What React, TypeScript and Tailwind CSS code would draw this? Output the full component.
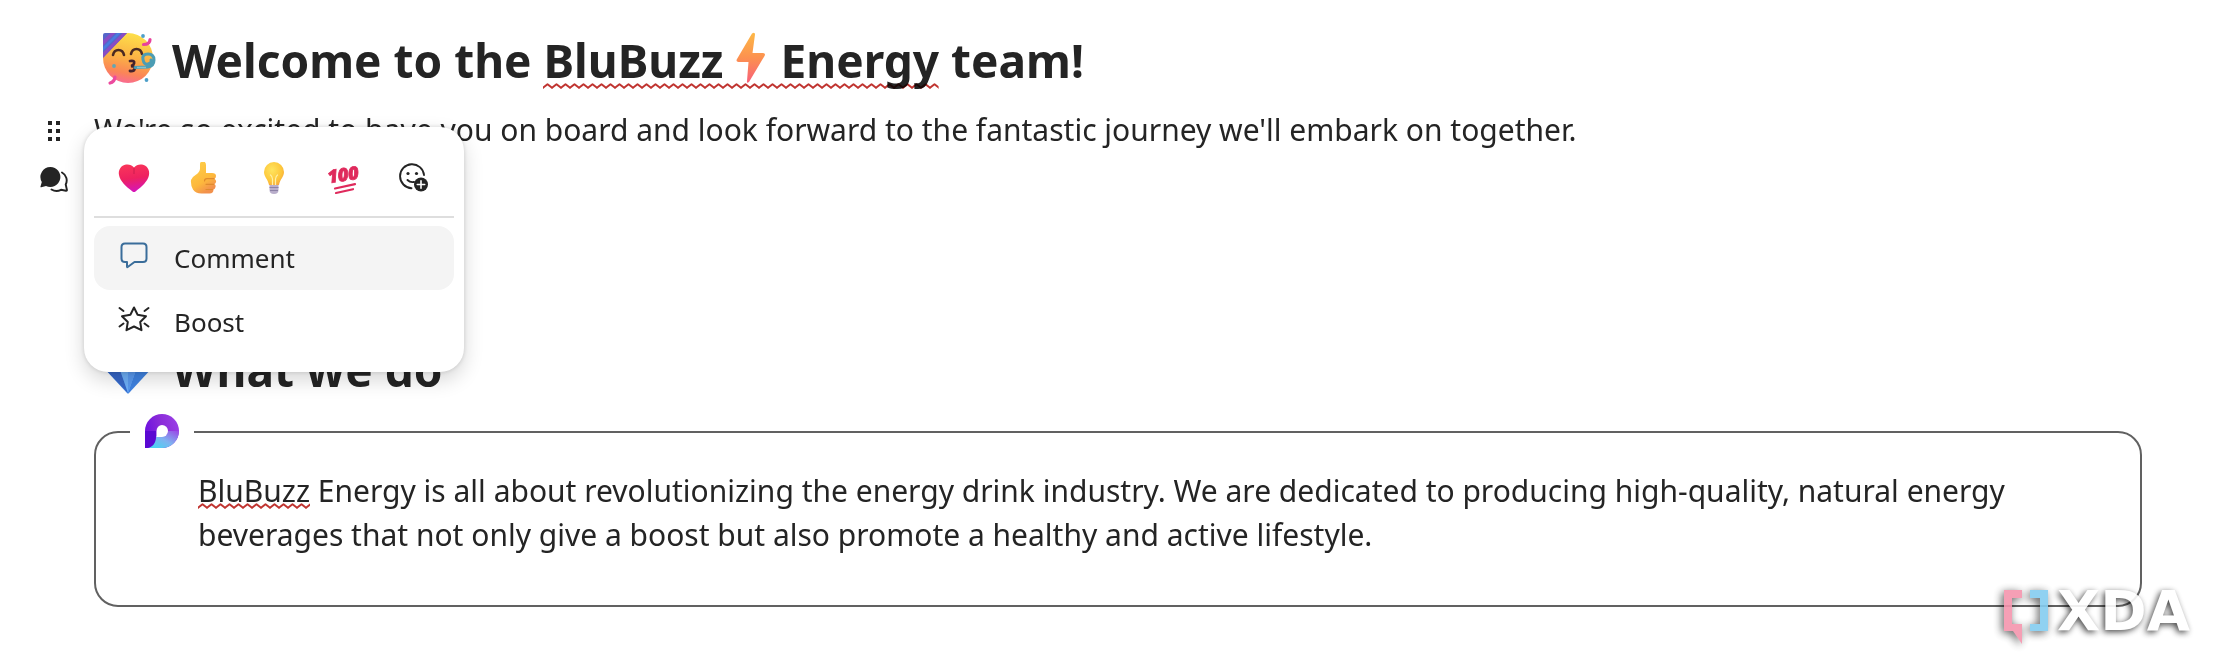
import { useId, type ReactNode } from "react";

/** Red spell-check wave under a word */
function Misspelled({ children }: { children: ReactNode }) {
  const id = useId();
  return (
    <span className="relative">
      {children}
      <svg className="absolute bottom-[2px] left-0 h-[6px] w-full mix-blend-multiply" aria-hidden="true">
        <defs>
          <pattern id={id} width="9" height="6" patternUnits="userSpaceOnUse">
            <path d="M-1 5.4 0 4.8 4.5 1.2 9 4.8 10 5.4" fill="none" stroke="#c03430" strokeWidth="2" strokeLinejoin="round" />
          </pattern>
        </defs>
        <rect width="100%" height="6" fill={`url(#${id})`} />
      </svg>
    </span>
  );
}

function PartyFace() {
  return (
    <svg viewBox="0 0 54 54" className="size-[54px] shrink-0" aria-hidden="true">
      <defs>
        <linearGradient id="party-face" x1="0.6" y1="0" x2="0.4" y2="1">
          <stop offset="0" stopColor="#fde04a" />
          <stop offset="0.5" stopColor="#fbb045" />
          <stop offset="0.8" stopColor="#fb8557" />
          <stop offset="1" stopColor="#f96a94" />
        </linearGradient>
        <clipPath id="party-hat">
          <path d="M3 0h22L1 25V2q0-2 2-2z" />
        </clipPath>
      </defs>
      <circle cx="26" cy="25" r="25" fill="url(#party-face)" />
      <g clipPath="url(#party-hat)">
        <path d="M0 0h26v26H0z" fill="#5566c9" />
        <path d="M-2 13 13-2M-2 25 25-2" stroke="#8a4cc4" strokeWidth="3.5" />
        <path d="M-2 19 19-2" stroke="#4a7be0" strokeWidth="2.5" />
      </g>
      <path d="M11 22q1-5 5.500-5t5.500 5M29 21q1-5 5.500-5t5.500 5" fill="none" stroke="#4a2a22" strokeWidth="2.600" strokeLinecap="round" />
      <path d="M28 28q5-1 4 2.500-.5 2-3 2.500 4 0 3.500 3-.5 2.500-4.500 2" fill="none" stroke="#44232c" strokeWidth="2.800" strokeLinecap="round" />
      <path d="M33 34.500 46 34q6-1 6-7t-6-6-5 5.500 5 4.500 3-4" fill="none" stroke="#4c9db4" strokeWidth="3" strokeLinecap="round" />
      <path d="M35 34.500h9" stroke="#84c4cf" strokeWidth="1.500" />
      <path d="M48 6.500q0 5-6.500 5" fill="none" stroke="#e8419c" strokeWidth="3.200" strokeLinecap="round" />
      <path d="M13 44q-.5 5-5 6" fill="none" stroke="#ec4a9e" strokeWidth="3.200" strokeLinecap="round" />
      <circle cx="41" cy="3" r="1.900" fill="#4d9fc9" />
      <circle cx="12" cy="33" r="1.900" fill="#5fa7b5" />
      <circle cx="44.500" cy="47" r="1.900" fill="#4d9fc9" />
    </svg>
  );
}

function Bolt() {
  return (
    <svg viewBox="0 0 34 52" className="ml-[10px] mr-[13px] inline-block h-[52px] w-[34px] align-[-6px]" aria-hidden="true">
      <defs>
        <linearGradient id="bolt" x1="0" y1="0" x2="0" y2="1">
          <stop offset="0" stopColor="#fdb846" />
          <stop offset="0.5" stopColor="#fc9150" />
          <stop offset="1" stopColor="#f8607a" />
        </linearGradient>
      </defs>
      <path d="M18 1.500q3-2 3 1L18.500 21H29q3 .5 1.500 3L15 50q-2.500 2-2-1l1.500-19H4.500q-3-.5-1.500-3z" fill="url(#bolt)" />
    </svg>
  );
}

function Diamond() {
  return (
    <svg viewBox="0 0 54 54" className="size-[54px] shrink-0" aria-hidden="true">
      <path d="M11 10h30l10 15L27 51q-1 1-2 0L1 25z" fill="#3f83e2" />
      <path d="M1 25h16l9 26z" fill="#3767c8" />
      <path d="M17 25h18l-9 26z" fill="#6fb0f8" />
      <path d="M26 25h9l-9 26z" fill="#5a9af0" />
      <path d="M11 10h30l-6 15H17z" fill="#8cc6fb" />
    </svg>
  );
}

function DragHandleIcon() {
  return (
    <svg viewBox="0 0 12 20" className="h-5 w-3" fill="#242424" aria-hidden="true">
      <path d="M0 0h4v4H0zM8 0h4v4H8zM0 8h4v4H0zM8 8h4v4H8zM0 16h4v4H0zM8 16h4v4H8z" />
    </svg>
  );
}

function ChatIcon() {
  return (
    <svg viewBox="0 0 28 26" className="h-[26px] w-7" aria-hidden="true">
      <path d="M10.500 0A10 10 0 1 1 6 19L1.200 20.300Q.2 20.500.5 19.500L1.800 15A10 10 0 0 1 10.500 0z" fill="#242424" />
      <path d="M22 5.500a9 9 0 0 1 3.700 12l1.200 5.300q.2 1.100-.9.900L21 22.800a9.500 9.500 0 0 1-9.500-.3" fill="none" stroke="#242424" strokeWidth="1.900" strokeLinecap="round" strokeLinejoin="round" />
    </svg>
  );
}

function HeartIcon() {
  return (
    <svg viewBox="0 0 32 32" className="size-8" aria-hidden="true">
      <defs>
        <linearGradient id="heart" x1="0.4" y1="0" x2="0.55" y2="1">
          <stop offset="0" stopColor="#f9355a" />
          <stop offset="0.5" stopColor="#ee2160" />
          <stop offset="1" stopColor="#d415bd" />
        </linearGradient>
      </defs>
      <path d="M16 5.500C18 3 21 2 24 2.500c5 .8 8 5.500 7 10.500-1 6-7 11.500-13.500 16.500q-1.500 1-3 0C8 24.500 2 19 1 13 0 8 3 3.300 8 2.500c3-.5 6 .5 8 3z" fill="url(#heart)" />
      <path d="M16 6v6" stroke="#c11a4c" strokeOpacity="0.5" strokeWidth="1.500" />
    </svg>
  );
}

function ThumbIcon() {
  return (
    <svg viewBox="0 0 32 32" className="size-8" aria-hidden="true">
      <defs>
        <linearGradient id="thumb" x1="0" y1="0" x2="0.500" y2="1">
          <stop offset="0" stopColor="#ffd24a" />
          <stop offset="0.700" stopColor="#fdb83c" />
          <stop offset="1" stopColor="#f2914c" />
        </linearGradient>
      </defs>
      <path d="M12 2q0-2.500 3-2.500T18 3v8h6q4 0 4 3 0 2-1.500 2.700 2 1.300 1.500 3.300-.3 1.500-1.500 2 1.500 1 1 3t-2 2.500q0 4-4 4h-8q-6 0-8.500-4T3 18q1-3 4.500-5 4-2.500 4.500-6z" fill="url(#thumb)" />
      <path d="M26 16.700h-7q-2.500 0-2.500 2.300M25.500 22.300H18M24.500 27.500H18" fill="none" stroke="#e08b2e" strokeWidth="1.200" strokeLinecap="round" />
    </svg>
  );
}

function BulbIcon() {
  return (
    <svg viewBox="0 0 32 32" className="size-8" aria-hidden="true">
      <defs>
        <radialGradient id="bulb" cx="0.4" cy="0.35" r="0.7">
          <stop offset="0" stopColor="#ffe45e" />
          <stop offset="0.700" stopColor="#fdc63a" />
          <stop offset="1" stopColor="#f5a73f" />
        </radialGradient>
      </defs>
      <path d="M16 0a10 10 0 0 1 10 10c0 5-4 7-5 13H11C10 17 6 15 6 10A10 10 0 0 1 16 0z" fill="url(#bulb)" />
      <path d="M12.500 13q1.500 1 2 4v6M19.500 13q-1.500 1-2 4v6" fill="none" stroke="#fff0a8" strokeWidth="1.200" strokeLinecap="round" />
      <path d="M11.500 23h9v5q0 4-4.500 4t-4.500-4z" fill="#b9aecb" />
      <path d="M11.500 25.500h9M12 28.500h8" stroke="#8d82a6" strokeWidth="1" />
    </svg>
  );
}

function HundredIcon() {
  return (
    <svg viewBox="0 0 32 32" className="size-8 overflow-visible" aria-hidden="true">
      <text
        x="15.500"
        y="19"
        transform="rotate(-8 16 16)"
        className="font-['Open_Sans',sans-serif] text-[18px] font-extrabold italic"
        fill="#df2a5c"
        stroke="#df2a5c"
        strokeWidth="0.8"
        textAnchor="middle"
      >
        100
      </text>
      <path d="M7 26.500 27 22.200M8 31l17-3.800" stroke="#df2a5c" strokeWidth="2.200" strokeLinecap="round" />
    </svg>
  );
}

function AddReactionIcon() {
  return (
    <svg viewBox="0 0 32 32" className="size-8" fill="none" aria-hidden="true">
      <path d="M13.500 26.200A12 12 0 1 1 26 13" stroke="#242424" strokeWidth="1.900" strokeLinecap="round" />
      <circle cx="10" cy="11.500" r="1.600" fill="#242424" />
      <circle cx="18.500" cy="11.500" r="1.600" fill="#242424" />
      <path d="M9.500 18q2.500 2.700 6.500 2" stroke="#242424" strokeWidth="1.900" strokeLinecap="round" />
      <circle cx="23" cy="22.500" r="7" fill="#242424" />
      <path d="M23 18.800v7.400M19.300 22.500h7.400" stroke="#fff" strokeWidth="1.600" strokeLinecap="round" />
    </svg>
  );
}

function CommentIcon() {
  return (
    <svg viewBox="0 0 32 32" className="size-8" fill="none" aria-hidden="true">
      <path
        d="M7 1.500h18q3.500 0 3.500 3.500v11.500q0 3.500-3.500 3.500h-8.500l-6.800 5q-.7.400-.7-.5V20H7q-3.500 0-3.500-3.500V5Q3.500 1.500 7 1.500z"
        stroke="#3a6d9a"
        strokeWidth="2"
        strokeLinejoin="round"
      />
    </svg>
  );
}

function BoostIcon() {
  return (
    <svg viewBox="0 0 32 32" className="size-8" fill="none" stroke="#242424" strokeWidth="2" strokeLinecap="round" strokeLinejoin="round" aria-hidden="true">
      <path d="M16 1.500 19.600 8.800 28 10.200 22.200 16 23.500 24.200 16 20.500 8.500 24.200 9.800 16 4 10.200 12.400 8.800z" />
      <path d="M1.500 2l4 3M30.500 2l-4 3M1.500 20.500l4-3M30.500 20.500l-4-3" />
    </svg>
  );
}

function LoopLogo() {
  return (
    <svg viewBox="0 0 34 34" className="size-[34px]" aria-hidden="true">
      <defs>
        <linearGradient id="loop-ring" x1="0" y1="0.600" x2="1" y2="0.300">
          <stop offset="0" stopColor="#6a0fe0" />
          <stop offset="0.500" stopColor="#8a2bd8" />
          <stop offset="1" stopColor="#9a3fe6" />
        </linearGradient>
        <linearGradient id="loop-tail" x1="0" y1="1" x2="1" y2="0">
          <stop offset="0.150" stopColor="#4fd0f2" />
          <stop offset="0.500" stopColor="#7fb2f0" />
          <stop offset="1" stopColor="#9a45e6" />
        </linearGradient>
      </defs>
      <path d="M17 0a17 17 0 0 1 0 34H0V17A17 17 0 0 1 17 0z" fill="url(#loop-ring)" />
      <path d="M11.500 22H17q6 0 6-5h11a17 17 0 0 1-17 17H3q6-2 8.500-12z" fill="url(#loop-tail)" />
      <path d="M0 17h11v5q0 12-11 12z" fill="#5a08d2" />
      <path d="M17 11a6 6 0 0 1 0 12h-5.500v-6A5.500 6 0 0 1 17 11z" fill="#fff" />
    </svg>
  );
}

function Watermark() {
  return (
    <div className="pointer-events-none absolute bottom-[27px] right-6 flex items-start gap-2 opacity-90">
      <svg viewBox="0 0 46 54" className="h-[54px] w-[46px] overflow-visible drop-shadow-[-2px_2px_4px_rgba(0,0,0,0.7)]" aria-hidden="true">
        <path d="M1 0h18v8H9v26h10v20L10 41H1z" fill="#f595ae" />
        <path d="M27 0h18v41H27v-7h10V8H27z" fill="#85cdf0" />
      </svg>
      <span className="font-['DejaVu_Sans',sans-serif] text-[56px] font-bold leading-[41px] text-white [text-shadow:-2px_2px_6px_rgba(0,0,0,0.8)]">
        XDA
      </span>
    </div>
  );
}

const REACTIONS = [
  { label: "Heart", icon: <HeartIcon /> },
  { label: "Thumbs up", icon: <ThumbIcon /> },
  { label: "Light bulb", icon: <BulbIcon /> },
  { label: "Hundred points", icon: <HundredIcon /> },
  { label: "Add reaction", icon: <AddReactionIcon /> },
];

function ReactionMenu() {
  return (
    <div className="absolute -left-[10px] top-[19px] z-10 w-[380px] rounded-3xl bg-white px-[10px] pb-[18px] shadow-[0_0_4px_rgba(0,0,0,0.14),0_8px_20px_rgba(0,0,0,0.16)]">
      <div className="flex justify-center border-b-2 border-[#dedede] pb-[22px] pt-[35px]">
        {REACTIONS.map((r) => (
          <button key={r.label} type="button" aria-label={r.label} className="flex w-[70px] justify-center">
            {r.icon}
          </button>
        ))}
      </div>
      <div className="mt-2 text-[26px] leading-8">
        <button type="button" className="flex w-full items-center gap-6 rounded-2xl bg-[#f4f4f4] px-6 py-4">
          <CommentIcon />
          Comment
        </button>
        <button type="button" className="flex w-full items-center gap-6 rounded-2xl px-6 py-4">
          <BoostIcon />
          Boost
        </button>
      </div>
    </div>
  );
}

export default function App() {
  return (
    <main className="relative bg-white pb-16 pr-[72px] pt-7 font-['Noto_Sans',sans-serif] text-[30px] leading-[44px] text-[#242424]">
      <h1 className="ml-[102px] flex items-center gap-4 text-[46px] font-bold leading-[64px]">
        <PartyFace />
        <span>
          Welcome to the{" "}
          <Misspelled>
            BluBuzz
            <Bolt />
            Energy
          </Misspelled>{" "}
          team!
        </span>
      </h1>

      <div className="mt-4 flex">
        <div className="ml-10 mr-[26px] flex w-7 flex-col items-center gap-[26px] pt-[13px]">
          <button type="button" aria-label="Move block">
            <DragHandleIcon />
          </button>
          <button type="button" aria-label="Comment on block">
            <ChatIcon />
          </button>
        </div>
        <div className="relative flex-1 pb-[185px]">
          <p>
            We're so excited to have you on board and look forward to the fantastic journey we'll embark on together.
          </p>
          <ReactionMenu />
        </div>
      </div>

      <h2 className="ml-[102px] flex items-center gap-4 text-[46px] font-bold leading-[64px]">
        <Diamond />
        What we do
      </h2>

      <section className="relative ml-[94px] mt-[30px] rounded-3xl border-2 border-[#616161] pb-12 pl-[102px] pr-[102px] pt-9">
        <div className="absolute -top-[19px] left-[34px] flex w-16 justify-center bg-white">
          <LoopLogo />
        </div>
        <p>
          <Misspelled>BluBuzz</Misspelled> Energy is all about revolutionizing the energy drink industry. We are
          dedicated to producing high-quality, natural energy beverages that not only give a boost but also promote a
          healthy and active lifestyle.
        </p>
      </section>

      <Watermark />
    </main>
  );
}
